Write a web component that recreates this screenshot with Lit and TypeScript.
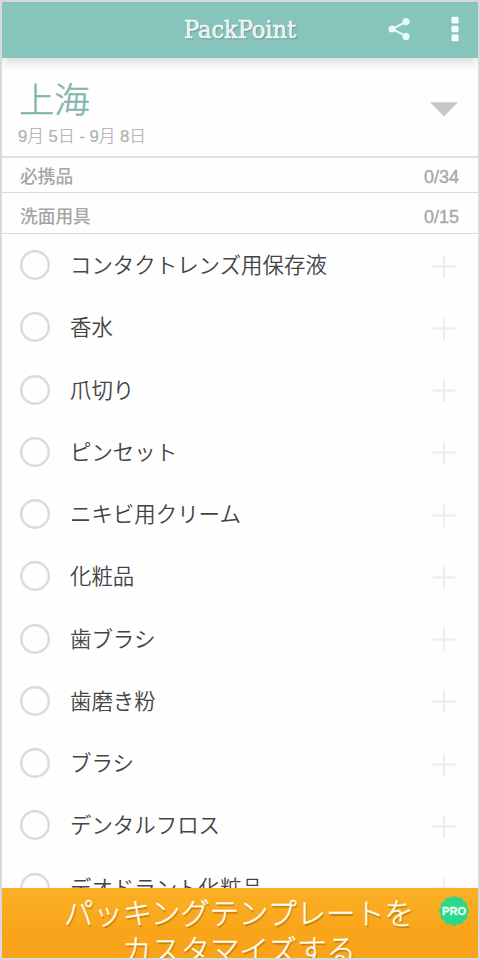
import { LitElement, html, css, svg } from "lit";
import { customElement } from "lit/decorators.js";

const ITEMS = [
  "コンタクトレンズ用保存液",
  "香水",
  "爪切り",
  "ピンセット",
  "ニキビ用クリーム",
  "化粧品",
  "歯ブラシ",
  "歯磨き粉",
  "ブラシ",
  "デンタルフロス",
  "デオドラント化粧品",
];

// Scalloped outline of the PRO seal: twelve shallow lobes around (16,16).
const SEAL = Array.from({ length: 96 }, (_, i) => {
  const a = (i / 96) * Math.PI * 2;
  const r = 14.4 + 0.7 * Math.cos(a * 12);
  return `${(16 + r * Math.cos(a)).toFixed(2)},${(16 + r * Math.sin(a)).toFixed(2)}`;
}).join(" ");

@customElement("app-root")
export class AppRoot extends LitElement {
  static styles = css`
    :host {
      display: block;
      box-sizing: border-box;
      width: 480px;
      height: 960px;
      border: 2px solid #d9d9d9;
      overflow: hidden;
      background: #fefefe;
      font-family: "Liberation Sans", "Noto Sans CJK JP", sans-serif;
    }
    .screen {
      height: 956px;
      display: flex;
      flex-direction: column;
      overflow: hidden;
    }
    .bar {
      height: 56px;
      flex: none;
      box-sizing: border-box;
      padding-bottom: 2px;
      display: grid;
      grid-template-columns: 182px 114px 1fr auto auto;
      align-items: center;
      background: #87c5bc;
      box-shadow: 0 2px 12px rgba(0, 0, 0, 0.2);
      z-index: 1;
    }
    .title {
      grid-column: 2;
      display: block;
      overflow: visible;
    }
    .title text {
      font: 23.5px "DejaVu Serif Condensed", "DejaVu Serif", serif;
      font-stretch: condensed;
      fill: #fff;
      stroke: #fff;
      stroke-width: 0.5px;
      text-shadow: 1px 1px 1px rgba(40, 90, 85, 0.35);
    }
    .share {
      grid-column: 4;
      margin-right: 41px;
      display: block;
    }
    .more {
      margin-right: 19px;
      display: block;
    }
    .trip {
      height: 100px;
      flex: none;
      box-sizing: border-box;
      border-bottom: 2px solid #e0e0e0;
      padding: 16px 20px 0 16px;
      display: flex;
      justify-content: space-between;
    }
    .city {
      margin-left: 1px;
      font: 300 35.3px/48px "Noto Sans CJK JP", sans-serif;
      color: #7fb5ac;
      -webkit-text-stroke: 0.5px #7fb5ac;
    }
    .dates {
      margin-top: 3px;
      font-size: 16.7px;
      line-height: 24px;
      font-weight: 300;
      color: #b0b0b0;
      -webkit-text-stroke: 0.2px #b0b0b0;
      white-space: nowrap;
    }
    .arrow {
      margin-top: 28px;
      display: block;
    }
    .section {
      flex: none;
      box-sizing: border-box;
      display: flex;
      justify-content: space-between;
      align-items: center;
      padding: 3px 19px 0 18px;
      font-size: 17.7px;
      font-weight: 500;
      color: #a5a5a5;
      border-bottom: 1px solid #dcdcdc;
      line-height: 24px;
    }
    .first {
      height: 35px;
    }
    .second {
      height: 41px;
      padding-top: 7px;
    }
    .count {
      -webkit-text-stroke: 0.4px #a9a9a9;
      font-size: 18px;
      color: #a9a9a9;
    }
    .list {
      flex: 1;
      min-height: 0;
      overflow: hidden;
    }
    .item {
      height: 62.25px;
      display: flex;
      align-items: center;
      padding: 0 22px 0 18px;
    }
    .ring {
      box-sizing: border-box;
      width: 30px;
      height: 30px;
      flex: none;
      border: 2px solid #dadada;
      box-shadow: inset 0 0 0 0.5px #dadada;
      border-radius: 50%;
    }
    .name {
      flex: 1;
      margin: -2px 0 0 20px;
      font: 350 21.45px/32px "Noto Sans CJK JP", sans-serif;
      color: #444;
      white-space: nowrap;
    }
    .plus {
      display: block;
      margin-top: 3px;
    }
    .promo {
      height: 70px;
      flex: none;
      overflow: hidden;
      background: linear-gradient(#fbb025, #f9a51a 60%, #f9a21a);
      display: grid;
      grid-template-columns: 61px 352px 1fr;
      z-index: 1;
    }
    .pitch {
      grid-column: 2;
      padding-top: 5px;
      text-align: center;
      font: 300 29.3px/36.5px "Noto Sans CJK JP", sans-serif;
      color: #fffdf0;
      -webkit-text-stroke: 0.4px #fffdf0;
      text-shadow: 1px 1.5px 1px rgba(120, 75, 0, 0.45);
      white-space: nowrap;
    }
    .seal {
      display: block;
      margin: 7px 0 0 23px;
    }
    .seal text {
      font: bold 10.5px "Liberation Sans", sans-serif;
      fill: #e8fff2;
      stroke: #e8fff2;
      stroke-width: 0.3px;
    }
  `;

  private row(name: string) {
    return html`<div class="item">
      <span class="ring"></span>
      <span class="name">${name}</span>
      <svg class="plus" width="24" height="24" viewBox="0 0 24 24">
        <path d="M1 11.5H23M12 0.5V23" stroke="#ececec" stroke-width="1.8" />
      </svg>
    </div>`;
  }

  render() {
    return html`<div class="screen">
      <header class="bar">
        <svg class="title" width="114" height="34">
          <text x="0" y="25.5" textLength="112" lengthAdjust="spacingAndGlyphs">PackPoint</text>
        </svg>
        <svg class="share" width="22" height="24" viewBox="0 0 22 24">
          <path d="M18 4.8L4 12L18 19.2" fill="none" stroke="#e4fbf6" stroke-width="2" />
          <g fill="#e4fbf6">
            <circle cx="18" cy="4.6" r="3.6" />
            <circle cx="4" cy="12" r="3.6" />
            <circle cx="18" cy="19.4" r="3.6" />
          </g>
        </svg>
        <svg class="more" width="8" height="26" viewBox="0 0 8 26" fill="#f5fffd">
          <rect x="0.5" y="0.8" width="7" height="6.6" rx="1.2" />
          <rect x="0.5" y="9.7" width="7" height="6.6" rx="1.2" />
          <rect x="0.5" y="18.6" width="7" height="6.6" rx="1.2" />
        </svg>
      </header>
      <section class="trip">
        <div>
          <div class="city">上海</div>
          <div class="dates">9月 5日 - 9月 8日</div>
        </div>
        <svg class="arrow" width="28" height="15" viewBox="0 0 28 15">
          <path d="M0 0.3H28L14 14.6Z" fill="#c8c8c8" />
        </svg>
      </section>
      <div class="section first"><span>必携品</span><span class="count">0/34</span></div>
      <div class="section second"><span>洗面用具</span><span class="count">0/15</span></div>
      <main class="list">${ITEMS.map((n) => this.row(n))}</main>
      <footer class="promo">
        <div class="pitch">パッキングテンプレートを<br />カスタマイズする</div>
        <svg class="seal" width="32" height="32" viewBox="0 0 32 32">
          ${svg`<polygon points=${SEAL} fill="#2bd88a" />`}
          <text x="4" y="20" textLength="24" lengthAdjust="spacingAndGlyphs">PRO</text>
        </svg>
      </footer>
    </div>`;
  }
}
